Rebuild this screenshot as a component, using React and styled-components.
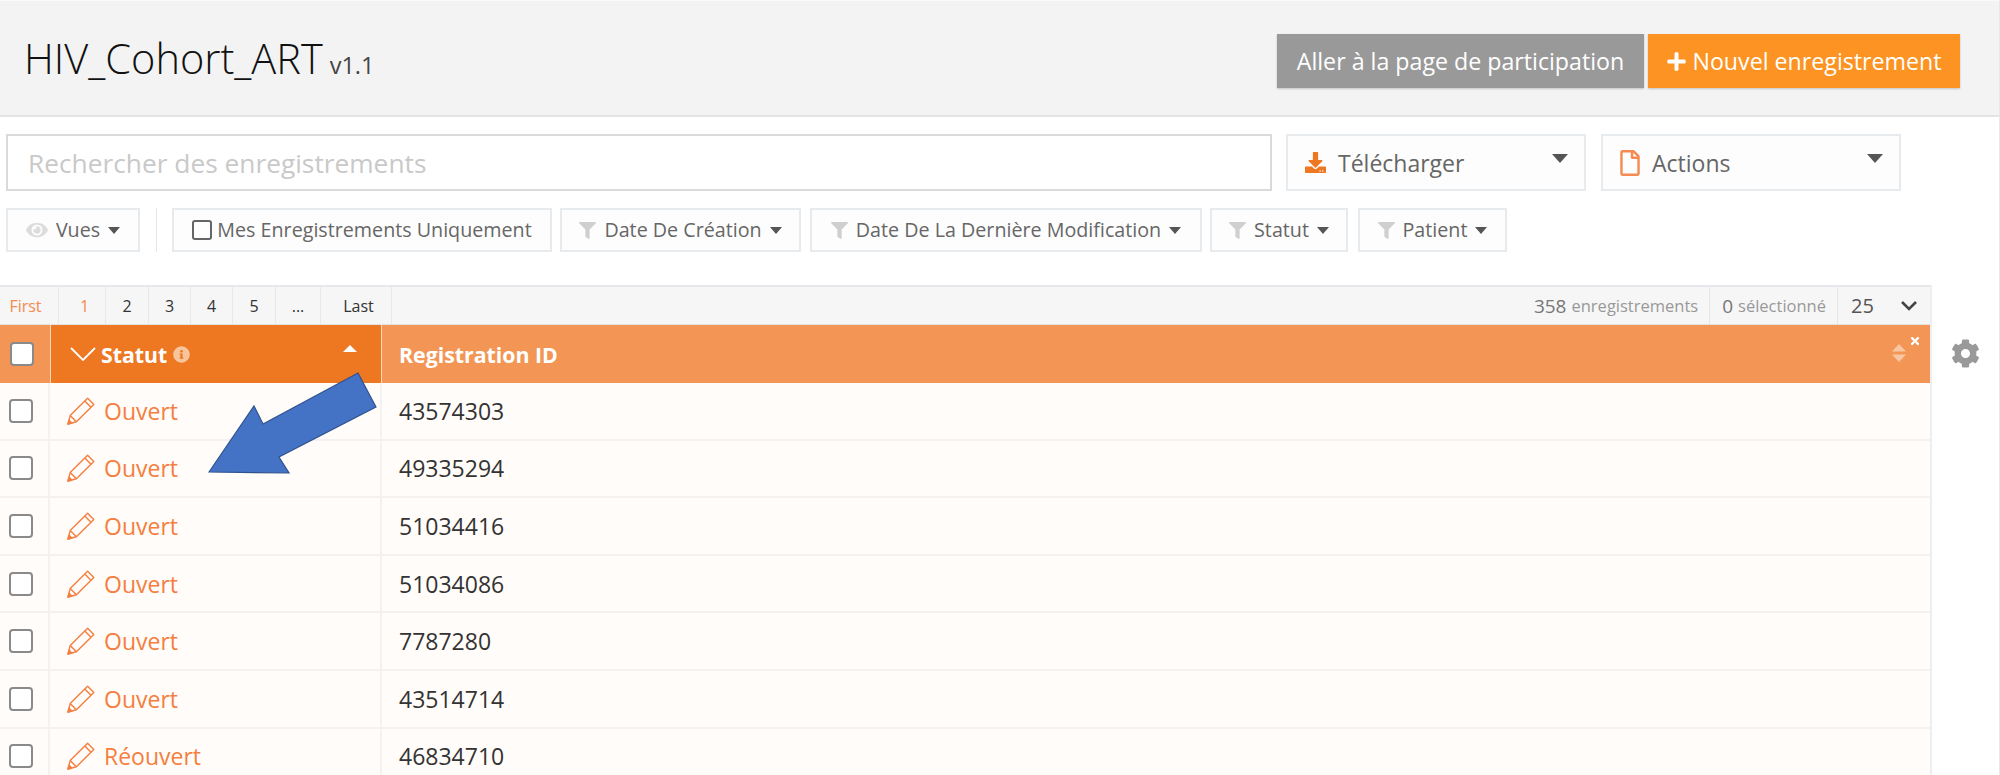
import React from 'react'
import styled, { createGlobalStyle } from 'styled-components'
import { FaCog, FaDownload, FaEye, FaFilter, FaInfoCircle, FaPlus, FaRegFile, FaTimes } from 'react-icons/fa'

const GlobalStyle = createGlobalStyle`
  html, body {
    margin: 0;
    padding: 0;
    height: 775px;
    overflow: hidden;
    background: #fff;
    font-family: "Open Sans", "Liberation Sans", sans-serif;
  }
  * { box-sizing: border-box; }
`

const rows = [
  ['Ouvert', '43574303'],
  ['Ouvert', '49335294'],
  ['Ouvert', '51034416'],
  ['Ouvert', '51034086'],
  ['Ouvert', '7787280'],
  ['Ouvert', '43514714'],
  ['Réouvert', '46834710'],
]

const pages = [
  { label: 'First', width: 59, active: true, padRight: 7 },
  { label: '1', width: 47, active: true, padLeft: 5 },
  { label: '2', width: 43 },
  { label: '3', width: 42 },
  { label: '4', width: 42 },
  { label: '5', width: 43 },
  { label: '...', width: 45 },
  { label: 'Last', width: 71, padLeft: 5 },
]

const filters = [
  { label: 'Date De Création', width: 241, gap: 9 },
  { label: 'Date De La Dernière Modification', width: 392, gap: 8 },
  { label: 'Statut', width: 138, gap: 10 },
  { label: 'Patient', width: 149, gap: 0 },
]

const Pencil = () => (
  <PencilSvg viewBox="0 0 28 28" fill="none" stroke="currentColor" strokeWidth="1.4" strokeLinejoin="round">
    <path d="M1 27 L3.2 18.6 L20.6 1.2 L26.8 7.4 L9.4 24.8 Z" />
    <path d="M3.2 18.6 L9.4 24.8 M17.8 4 L24 10.2" />
    <path d="M1 27 L2 23.2 L4.8 26 Z" fill="currentColor" />
  </PencilSvg>
)

const App = () => (
  <Page>
    <GlobalStyle />
    <Header>
      <Title>
        HIV_Cohort_ART<Version>v1.1</Version>
      </Title>
      <HeaderActions>
        <HeaderButton color="#999999" width={367}>Aller à la page de participation</HeaderButton>
        <HeaderButton color="#fc9322" width={312}>
          <FaPlus size={21} />
          Nouvel enregistrement
        </HeaderButton>
      </HeaderActions>
    </Header>

    <Toolbar>
      <SearchRow>
        <SearchInput placeholder="Rechercher des enregistrements" readOnly />
        <BigDropdown>
          <FaDownload size={21} color="#ee7722" />
          Télécharger
          <BigCaret />
        </BigDropdown>
        <BigDropdown>
          <FileIcon size={26} />
          Actions
          <BigCaret />
        </BigDropdown>
      </SearchRow>
      <FilterRow>
        <FilterButton width={134}>
          <FaEye size={22} color="#dcdcdc" />
          Vues
          <SmallCaret />
        </FilterButton>
        <Separator />
        <FilterButton width={380} gap={8}>
          <FilterCheck />
          Mes Enregistrements Uniquement
        </FilterButton>
        {filters.map((f) => (
          <FilterButton key={f.label} width={f.width} gap={f.gap}>
            <FaFilter size={17} color="#cfcfcf" />
            {f.label}
            <SmallCaret />
          </FilterButton>
        ))}
      </FilterRow>
    </Toolbar>

    <TableArea>
      <Table>
        <Pagination>
          {pages.map((p) => (
            <PageCell key={p.label} width={p.width} active={p.active} padLeft={p.padLeft} padRight={p.padRight}>
              {p.label}
            </PageCell>
          ))}
          <PaginationInfo>
            <Count>
              358 <CountLabel>enregistrements</CountLabel>
            </Count>
            <Count>
              0 <CountLabel>sélectionné</CountLabel>
            </Count>
            <PageSize>
              25
              <svg width="18" height="11" viewBox="0 0 18 11" fill="none" stroke="#444" strokeWidth="2.6">
                <path d="M2 2 L9 9 L16 2" />
              </svg>
            </PageSize>
          </PaginationInfo>
        </Pagination>

        <HeadRow>
          <HeadCheckCell>
            <CheckBox />
          </HeadCheckCell>
          <StatusHead>
            <svg width="26" height="16" viewBox="0 0 26 16" fill="none" stroke="#fff" strokeWidth="1.8">
              <path d="M1 2 L13 14 L25 2" />
            </svg>
            Statut
            <InfoIcon size={17} />
            <SortUp />
          </StatusHead>
          <RegistrationHead>
            Registration ID
            <SortBoth>
              <svg width="14" height="18" viewBox="0 0 14 18" fill="#f9c6a2">
                <path d="M7 0 L14 7.5 H0 Z M0 10.5 H14 L7 18 Z" />
              </svg>
            </SortBoth>
            <CloseIcon size={12} />
          </RegistrationHead>
        </HeadRow>

        {rows.map(([status, id]) => (
          <Row key={id}>
            <CheckCell>
              <CheckBox />
            </CheckCell>
            <StatusCell>
              <Pencil />
              {status}
            </StatusCell>
            <IdCell>{id}</IdCell>
          </Row>
        ))}

        <Arrow viewBox="0 0 175 105" width="175" height="105">
          <path
            d="M150 2 L168 36 L71 86 L81 102 L1 101 L46 35 L55 53 Z"
            fill="#4472c4"
            stroke="#2f528f"
            strokeWidth="1.2"
          />
        </Arrow>
      </Table>
      <GearIcon size={29} />
    </TableArea>
  </Page>
)

const Page = styled.div`
  width: 2000px;
  height: 775px;
  overflow: hidden;
  border-right: 1px solid #e8e8e8;
  color: #333;
`

const Header = styled.header`
  height: 117px;
  background: #f3f3f3;
  border-top: 1px solid #fafafa;
  border-bottom: 2px solid #e4e4e4;
  display: flex;
  justify-content: space-between;
  padding: 33px 39px 0 24px;
`

const Title = styled.h1`
  margin: 0;
  font-size: 41.5px;
  font-weight: 300;
  line-height: 48px;
  color: #111;
  white-space: nowrap;
`

const Version = styled.small`
  font-size: 23.5px;
  font-weight: 400;
  color: #444;
  margin-left: 7px;
`

const HeaderActions = styled.div`
  display: flex;
  gap: 4px;
  height: 54px;
`

const HeaderButton = styled.button`
  width: ${(p) => p.width}px;
  height: 54px;
  border: 0;
  background: ${(p) => p.color};
  box-shadow: 0 1px 2px rgba(0, 0, 0, 0.2);
  color: #fff;
  font-family: inherit;
  font-size: 23.2px;
  display: flex;
  align-items: center;
  justify-content: center;
  gap: 5px;
  padding: 0;
  white-space: nowrap;
`

const Toolbar = styled.div`
  padding: 17px 0 0 6px;
`

const SearchRow = styled.div`
  display: flex;
  gap: 14px;
`

const SearchInput = styled.input`
  width: 1266px;
  height: 57px;
  border: 2px solid #dadada;
  padding: 0 20px;
  font-family: inherit;
  font-size: 26.3px;
  color: #555;
  outline: none;
  &::placeholder {
    color: #c9c9c9;
    opacity: 1;
  }
`

const BigDropdown = styled.div`
  position: relative;
  width: 300px;
  height: 57px;
  margin-right: 1px;
  border: 2px solid #e8ebee;
  background: #fdfdfd;
  display: flex;
  align-items: center;
  gap: 12px;
  padding-left: 17px;
  font-size: 23px;
  color: #666;
`

const FileIcon = styled(FaRegFile)`
  color: #f58a52;
  margin: 0 -3px;
`

const BigCaret = styled.span`
  position: absolute;
  top: 18px;
  right: 16px;
  border-left: 8px solid transparent;
  border-right: 8px solid transparent;
  border-top: 9px solid #555;
`

const FilterRow = styled.div`
  display: flex;
  margin-top: 17px;
  align-items: stretch;
`

const FilterButton = styled.div`
  width: ${(p) => p.width}px;
  height: 44px;
  margin-right: ${(p) => p.gap ?? 0}px;
  border: 2px solid #e8ebee;
  background: #fdfdfd;
  display: flex;
  align-items: center;
  justify-content: center;
  gap: 8px;
  font-size: 19.7px;
  line-height: 38px;
  color: #666;
  white-space: nowrap;
`

const Separator = styled.div`
  width: 1px;
  height: 44px;
  background: #e6e6e6;
  margin: 0 15px 0 16px;
`

const FilterCheck = styled.span`
  width: 20px;
  height: 20px;
  border: 2px solid #666;
  border-radius: 3px;
  background: #fff;
  margin-right: -3px;
`

const SmallCaret = styled.span`
  border-left: 6px solid transparent;
  border-right: 6px solid transparent;
  border-top: 7px solid #555;
`

const TableArea = styled.div`
  display: flex;
  margin-top: 33px;
`

const Table = styled.div`
  position: relative;
  width: 1932px;
  border-right: 2px solid #eceef0;
`

const Pagination = styled.div`
  height: 40px;
  display: flex;
  background: #f6f6f6;
  border-top: 2px solid #e6e8ec;
  border-bottom: 1px solid #e3e3e3;
`

const PageCell = styled.div`
  width: ${(p) => p.width}px;
  display: flex;
  align-items: center;
  justify-content: center;
  padding: 0 ${(p) => p.padRight ?? 0}px 0 ${(p) => p.padLeft ?? 0}px;
  font-size: 16px;
  color: ${(p) => (p.active ? '#f58a4e' : '#333')};
  border-right: 1px solid #e8e8e8;
`

const PaginationInfo = styled.div`
  flex: 1;
  display: flex;
  justify-content: flex-end;
`

const Count = styled.div`
  display: flex;
  align-items: center;
  gap: 5px;
  padding: 0 11px 0 12px;
  font-size: 19px;
  color: #777;
  border-right: 1px solid #e3e6ea;
  white-space: nowrap;
`

const CountLabel = styled.span`
  font-size: 16.5px;
  color: #999;
`

const PageSize = styled.div`
  width: 92px;
  display: flex;
  align-items: center;
  justify-content: space-between;
  padding: 0 12px 0 13px;
  font-size: 20px;
  color: #555;
`

const HeadRow = styled.div`
  height: 58px;
  display: grid;
  grid-template-columns: 50px 332px 1fr;
  background: #f39655;
  color: #fff;
  font-size: 21.3px;
  font-weight: 700;
`

const HeadCheckCell = styled.div`
  display: flex;
  align-items: center;
  justify-content: center;
`

const StatusHead = styled.div`
  position: relative;
  display: flex;
  align-items: center;
  gap: 5px;
  padding-left: 19px;
  background: #ee7722;
  border-left: 1px solid #fbd9c1;
  border-right: 1px solid #fbd9c1;
`

const InfoIcon = styled(FaInfoCircle)`
  color: #f8c49c;
  margin-left: 1px;
`

const SortUp = styled.span`
  position: absolute;
  top: 20px;
  right: 24px;
  border-left: 7px solid transparent;
  border-right: 7px solid transparent;
  border-bottom: 7px solid #fff;
`

const RegistrationHead = styled.div`
  position: relative;
  display: flex;
  align-items: center;
  padding-left: 17px;
`

const SortBoth = styled.span`
  position: absolute;
  top: 19px;
  right: 24px;
  display: flex;
`

const CloseIcon = styled(FaTimes)`
  position: absolute;
  top: 10px;
  right: 9px;
  color: #fff;
`

const Row = styled.div`
  height: 57.6px;
  display: grid;
  grid-template-columns: 50px 332px 1fr;
  background: #fffcf9;
  border-bottom: 2px solid #f3f2f0;
  font-size: 23px;
`

const CheckCell = styled.div`
  display: flex;
  align-items: center;
  justify-content: center;
  border-right: 2px solid #f3f2f0;
`

const StatusCell = styled.div`
  display: flex;
  align-items: center;
  gap: 9px;
  padding-left: 17px;
  color: #f47f40;
  border-right: 2px solid #f3f2f0;
`

const PencilSvg = styled.svg`
  width: 28px;
  height: 28px;
`

const IdCell = styled.div`
  display: flex;
  align-items: center;
  padding-left: 17px;
  color: #333;
`

const CheckBox = styled.span`
  width: 24px;
  height: 24px;
  margin-right: 6px;
  background: #fff;
  border: 2px solid #8a8a8a;
  border-radius: 4px;
`

const Arrow = styled.svg`
  position: absolute;
  top: 86px;
  left: 208px;
`

const GearIcon = styled(FaCog)`
  margin: 54px 0 0 19px;
  color: #999;
`

export default App
